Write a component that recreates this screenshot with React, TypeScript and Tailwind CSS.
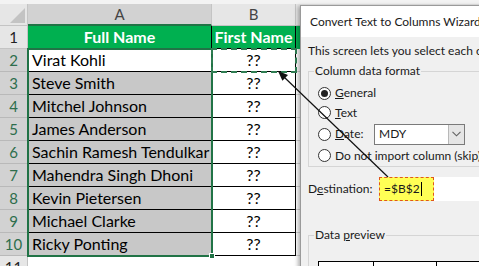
import React from 'react';

const names = [
  'Virat Kohli',
  'Steve Smith',
  'Mitchel Johnson',
  'James Anderson',
  'Sachin Ramesh Tendulkar',
  'Mahendra Singh Dhoni',
  'Kevin Pietersen',
  'Michael Clarke',
  'Ricky Ponting',
];

function Radio({ checked }: { checked?: boolean }) {
  return (
    <span className="flex h-[13px] w-[13px] shrink-0 items-center justify-center rounded-full border border-[#333] bg-white">
      {checked && <span className="h-[7px] w-[7px] rounded-full bg-[#222]" />}
    </span>
  );
}

function Dialog() {
  return (
    <div className="absolute left-[300px] top-[5px] z-10 h-[270px] w-[200px] border-l border-t border-[#9a9a9a] bg-[#f0f0f0] font-['Lato',sans-serif] text-[12px] text-[#1a1a1a] shadow-[-2px_1px_4px_rgba(0,0,0,0.3)]">
      <div className="flex h-[31px] items-center whitespace-nowrap bg-white pl-[9px] text-[12px]">
        Convert Text to Columns Wizard
      </div>
      <div className="pl-[7px]">
        <div className="mt-[4px] flex h-[20px] items-center whitespace-nowrap">
          This screen lets you select each column and set the Data Format.
        </div>
        <fieldset className="border border-[#d5d5d5] pb-0 pl-[5px]">
          <legend className="px-[1px] leading-[20px]">Column data format</legend>
          <div className="pl-[4px]">
            <div className="mt-[2px] flex h-[20px] items-center gap-[4px]">
              <Radio checked />
              <span>
                <span className="underline">G</span>eneral
              </span>
            </div>
            <div className="flex h-[19px] items-center gap-[4px]">
              <Radio />
              <span>
                <span className="underline">T</span>ext
              </span>
            </div>
            <div className="mt-[1px] flex h-[22px] items-center">
              <Radio />
              <span className="ml-[4px] w-[39px]">
                <span className="underline">D</span>ate:
              </span>
              <div className="flex h-[21px] w-[91px] items-center border border-[#7a7a7a] bg-white">
                <span className="flex-1 pl-[4px]">MDY</span>
                <span className="flex h-full w-[16px] items-center justify-center border-l border-[#b8b8b8] bg-[#e5e5e5]">
                  <svg width="9" height="6" viewBox="0 0 9 6">
                    <path d="M0.5 0.8 L4.5 4.8 L8.5 0.8" fill="none" stroke="#606060" strokeWidth="1.1" />
                  </svg>
                </span>
              </div>
            </div>
            <div className="flex h-[21px] items-center gap-[4px] whitespace-nowrap">
              <Radio />
              <span>Do not import column (skip)</span>
            </div>
          </div>
        </fieldset>
        <div className="mt-[10px] flex h-[24px] items-center">
          <span className="w-[71px] shrink-0">
            D<span className="underline">e</span>stination:
          </span>
          <div className="flex h-full flex-1 bg-white">
            <div className="flex w-[55px] items-center border border-dashed border-[#e0561b] bg-[#ffff55] pl-[4px]">
              =$B$2<span className="ml-[1px] h-[14px] w-[1px] bg-black" />
            </div>
          </div>
        </div>
        <fieldset className="mt-[24px] h-[60px] border border-[#d5d5d5] pl-[5px]">
          <legend className="px-[1px] leading-[20px]">
            Data <span className="underline">p</span>review
          </legend>
          <div className="ml-[4px] mt-[16px] flex h-[20px] border-l border-t border-black bg-white">
            <div className="w-[55px] border-r border-black" />
            <div className="w-[63px] border-r border-black" />
            <div className="flex-1" />
          </div>
        </fieldset>
      </div>
    </div>
  );
}

export default function App() {
  return (
    <div className="relative h-[266px] w-[479px] overflow-hidden bg-white font-['Lato',sans-serif]">
      {/* column headers */}
      <div className="flex h-[26px] bg-[#f3f3f3] pt-[4px] text-[15px] text-[#444]">
        <div className="relative w-[28px] border-b border-r border-[#c4c4c4] bg-[#e6e6e6]">
          <svg className="absolute left-0 top-0" width="28" height="22" viewBox="0 0 28 22">
            <polygon points="25,4 25,19 10,19" fill="#c3c3c3" />
          </svg>
        </div>
        <div className="flex w-[184px] items-center justify-center border-b-2 border-r border-b-[#217346] border-r-[#c4c4c4] bg-[#d2d2d2]">
          A
        </div>
        <div className="flex w-[84px] items-center justify-center border-b border-r border-[#c4c4c4] bg-[#e6e6e6]">
          B
        </div>
        <div className="flex-1 border-b border-[#c4c4c4] bg-[#e6e6e6]" />
      </div>

      {/* header row */}
      <div className="flex h-[23px] whitespace-nowrap text-[16px]">
        <div className="flex w-[28px] items-center justify-center border-b border-r border-[#c4c4c4] bg-[#e6e6e6] text-[15px] text-[#222]">
          1
        </div>
        <div className="flex w-[184px] items-center justify-center border-b border-r border-black bg-[#00b050] font-bold text-white">
          Full Name
        </div>
        <div className="flex w-[84px] items-center justify-center border-b border-r border-black bg-[#00b050] font-bold text-white">
          First Name
        </div>
        <div className="flex-1 bg-[#00b050]" />
      </div>

      {/* data rows */}
      {names.map((name, i) => (
        <div key={name} className="flex h-[23px] whitespace-nowrap text-[16px] text-black">
          <div className="flex w-[28px] items-center justify-center border-b border-r border-[#b9b9b9] bg-[#d2d2d2] text-[15px] text-[#2e6e4c]">
            {i + 2}
          </div>
          <div
            className={`flex w-[184px] items-center overflow-hidden border-b border-r border-black pl-[4px] ${
              i === 0 ? 'bg-white' : 'bg-[#c8c8c8]'
            }`}
          >
            {name}
          </div>
          <div className="flex w-[84px] items-center justify-center border-b border-r border-black bg-white">
            ??
          </div>
          <div className="flex-1 border-b border-[#d4d4d4]" />
        </div>
      ))}

      {/* row 11 */}
      <div className="flex h-[23px]">
        <div className="flex w-[28px] items-start justify-center border-r border-[#c4c4c4] bg-[#e6e6e6] pt-[2px] text-[15px] leading-[18px] text-[#222]">
          11
        </div>
        <div className="flex-1" />
      </div>

      {/* selection A2:A10 */}
      <div className="pointer-events-none absolute left-[27px] top-[48px] h-[209px] w-[186px] border-2 border-[#217346]" />
      <div className="pointer-events-none absolute left-[209px] top-[253px] h-[6px] w-[6px] border border-white bg-[#217346]" />

      {/* copy marquee B2 */}
      <div className="pointer-events-none absolute left-[211px] top-[48px] h-[25px] w-[86px] border-2 border-dashed border-[#2f7d52]" />

      <Dialog />

      {/* reference arrow */}
      <svg className="pointer-events-none absolute left-0 top-0 z-20" width="479" height="266" viewBox="0 0 479 266">
        <line x1="388" y1="177" x2="284" y2="77" stroke="#111" strokeWidth="1.2" />
        <polygon points="278,71 288,75 282.4,80.8" fill="#111" />
      </svg>
    </div>
  );
}
